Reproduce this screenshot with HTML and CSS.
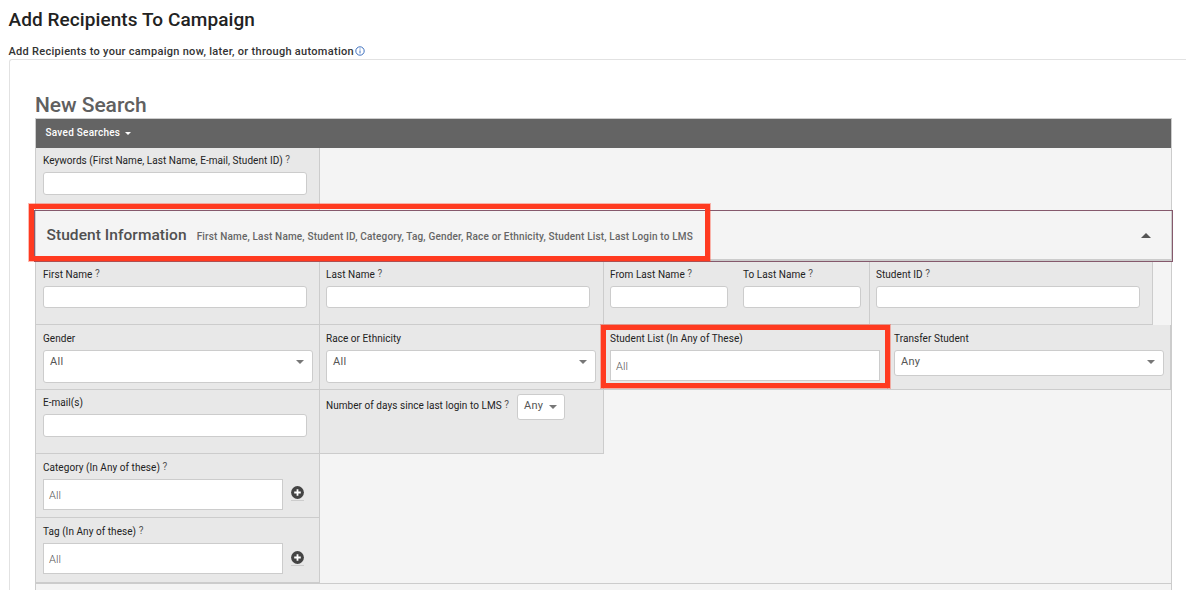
FILE: index.html
```html
<!DOCTYPE html>
<html lang="en">
<head>
    <meta charset="UTF-8">
    <meta name="viewport" content="width=device-width, initial-scale=1.0">
    <title>Add Recipients To Campaign</title>
    <link rel="stylesheet" href="styles.css">
</head>
<body>
    <h1>Add Recipients To Campaign</h1>
    <div class="subtitle">
        <span>Add Recipients to your campaign now, later, or through automation</span>
        <svg class="info" viewBox="0 0 10 10"><circle cx="5" cy="5" r="4.2"/><path d="M5 4.4v3M5 2.5v1"/></svg>
    </div>

    <div class="panel">
        <h2>New Search</h2>
        <div class="search">
            <div class="toolbar">Saved Searches <i class="caret"></i></div>

            <div class="row keywords">
                <div class="cell">
                    <label>Keywords (First Name, Last Name, E-mail, Student ID) <sup>?</sup></label>
                    <input type="text">
                </div>
            </div>

            <div class="section-head">
                <h3>Student Information</h3>
                <span class="summary">First Name, Last Name, Student ID, Category, Tag, Gender, Race or Ethnicity, Student List, Last Login to LMS</span>
                <i class="caret up"></i>
                <div class="highlight highlight-head"></div>
            </div>

            <div class="row">
                <div class="cell">
                    <label>First Name <sup>?</sup></label>
                    <input type="text">
                </div>
                <div class="cell">
                    <label>Last Name <sup>?</sup></label>
                    <input type="text">
                </div>
                <div class="cell range">
                    <div>
                        <label>From Last Name <sup>?</sup></label>
                        <input type="text">
                    </div>
                    <div>
                        <label>To Last Name <sup>?</sup></label>
                        <input type="text">
                    </div>
                </div>
                <div class="cell last">
                    <label>Student ID <sup>?</sup></label>
                    <input type="text">
                </div>
            </div>

            <div class="row tall">
                <div class="cell">
                    <label>Gender</label>
                    <div class="select big">All <i class="caret"></i></div>
                </div>
                <div class="cell">
                    <label>Race or Ethnicity</label>
                    <div class="select big">All <i class="caret"></i></div>
                </div>
                <div class="cell">
                    <label>Student List (In Any of These)</label>
                    <div class="multi wide">All</div>
                    <div class="highlight highlight-list"></div>
                </div>
                <div class="cell last">
                    <label>Transfer Student</label>
                    <div class="select">Any <i class="caret"></i></div>
                </div>
            </div>

            <div class="row">
                <div class="cell email">
                    <label>E-mail(s)</label>
                    <input type="text">
                </div>
                <div class="cell login">
                    <label>Number of days since last login to LMS <sup>?</sup></label>
                    <div class="select small">Any <i class="caret"></i></div>
                </div>
            </div>

            <div class="row">
                <div class="cell">
                    <label>Category (In Any of these) <sup>?</sup></label>
                    <div class="picker">
                        <div class="multi">All</div>
                        <a class="add"><svg viewBox="0 0 13 13"><circle cx="6.5" cy="6.5" r="6.4"/><path d="M6.5 3.2v6.6M3.2 6.5h6.6"/></svg></a>
                    </div>
                </div>
            </div>

            <div class="row tall">
                <div class="cell">
                    <label>Tag (In Any of these) <sup>?</sup></label>
                    <div class="picker tag">
                        <div class="multi">All</div>
                        <a class="add"><svg viewBox="0 0 13 13"><circle cx="6.5" cy="6.5" r="6.4"/><path d="M6.5 3.2v6.6M3.2 6.5h6.6"/></svg></a>
                    </div>
                </div>
            </div>

            <div class="next-section"></div>
        </div>
    </div>
</body>
</html>
```

FILE: styles.css
```css
* {
    margin: 0;
    padding: 0;
    box-sizing: border-box;
}

body {
    height: 590px;
    overflow: hidden;
    padding-left: 9px;
    background: #fff;
    color: #222;
    font-family: Roboto, "Liberation Sans", sans-serif;
    font-size: 10px;
}

h1 {
    height: 43px;
    margin-left: -0.5px;
    padding-top: 7px;
    font-size: 19px;
    font-weight: 500;
    line-height: 25px;
    letter-spacing: 0.08px;
}

.subtitle {
    display: flex;
    align-items: center;
    height: 16px;
    margin-left: -0.5px;
    color: #333;
    font-size: 11px;
    font-weight: 500;
    letter-spacing: 0.29px;
}

.subtitle span {
    line-height: 16px;
    padding-top: 1px;
}

.info {
    width: 10px;
    height: 10px;
    margin-left: 1px;
    fill: none;
    stroke: #2a62b8;
    stroke-width: 0.9;
}

.panel {
    height: 540px;
    padding: 32px 0 0 25px;
    border-top: 1px solid #e2e2e2;
    border-left: 1px solid #e2e2e2;
    border-top-left-radius: 3px;
}

h2 {
    height: 26px;
    color: #606060;
    font-size: 21px;
    font-weight: 500;
    line-height: 26px;
    letter-spacing: -0.05px;
}

.search {
    width: 1137px;
    height: 500px;
    border: 1px solid #ccc;
    background: #f4f4f4;
}

.toolbar {
    display: flex;
    align-items: center;
    height: 29px;
    padding: 0 0 2px 9.5px;
    background: #646464;
    color: #fff;
    font-weight: 500;
    letter-spacing: 0.25px;
}

.caret {
    width: 0;
    height: 0;
    border: 4px solid transparent;
    border-top-color: #777;
    border-bottom: 0;
}

.toolbar .caret {
    margin: 2px 0 0 5px;
    border-width: 3px;
    border-top-color: #fff;
    border-bottom: 0;
}

.row {
    display: flex;
    height: 64px;
}

.tall {
    height: 65px;
}

.keywords {
    height: 62px;
}

.cell {
    position: relative;
    width: 284px;
    padding: 7px 0 0 6px;
    border-right: 1px solid #ccc;
    border-bottom: 1px solid #ccc;
    background: #e8e8e8;
}

.cell:first-child {
    padding-left: 7px;
}

.keywords .cell {
    height: 64px;
    padding-top: 6px;
}

.cell.last {
    width: 283px;
}

.cell label {
    display: block;
    height: 18px;
    line-height: 14px;
    letter-spacing: 0.05px;
    white-space: nowrap;
}

sup {
    position: relative;
    top: -1px;
    color: #555;
    font-size: 10px;
    line-height: 0;
    vertical-align: baseline;
}

input {
    display: block;
    width: 264px;
    height: 22px;
    border: 1px solid #ccc;
    border-radius: 3px;
    background: #fff;
}

.keywords input,
.email input {
    height: 23px;
}

.cell.email {
    padding-top: 6px;
}

.range {
    display: flex;
    gap: 15px;
    width: 266px;
}

.range input {
    width: 118px;
}

.section-head {
    position: relative;
    z-index: 1;
    display: flex;
    height: 52px;
    margin: 0 -2px -1px;
    padding: 0 21px 0 11.5px;
    border: 1px solid #85596c;
    background: #f4f4f4;
    box-shadow: inset 0 -2px #ccc, inset -1px 0 #ccc, inset 1px 0 #ccc;
}

h3 {
    color: #505050;
    font-size: 15.5px;
    font-weight: 500;
    line-height: 48px;
    letter-spacing: 0.06px;
}

.summary {
    flex: 1;
    margin-left: 10px;
    color: #666;
    font-weight: 500;
    line-height: 51px;
    letter-spacing: 0.17px;
}

.caret.up {
    margin-top: 22px;
    border: 5px solid transparent;
    border-top: 0;
    border-bottom-color: #555;
}

.highlight {
    position: absolute;
    border: 5px solid #ff3a20;
    outline: 1px solid rgba(255, 58, 32, 0.35);
}

.highlight-head {
    top: -7px;
    left: -6px;
    width: 681px;
    height: 57px;
}

.highlight-list {
    top: 0;
    left: -3px;
    width: 289px;
    height: 63px;
    z-index: 1;
}

.select {
    display: flex;
    justify-content: space-between;
    width: 270px;
    height: 26px;
    padding: 0 8px 0 6px;
    border: 1px solid #ccc;
    border-radius: 3px;
    background: #fff;
    color: #555;
    font-size: 11px;
    line-height: 22px;
    letter-spacing: 0.3px;
}

.select .caret {
    margin-top: 9px;
}

.select.big {
    height: 33px;
}

.multi {
    width: 240px;
    height: 31px;
    padding-left: 5px;
    border: 1px solid #ccc;
    background: #fff;
    color: #555;
    font-size: 11px;
    font-weight: 300;
    line-height: 31px;
    letter-spacing: 0.1px;
}

.multi.wide {
    width: 270px;
}

.login {
    display: flex;
    padding-top: 4px;
}

.login label {
    line-height: 24px;
}

.select.small {
    width: 48px;
    margin-left: 8px;
    padding-right: 7px;
}

.select.small .caret {
    margin-top: 10px;
}

.picker {
    display: flex;
}

.add {
    width: 13px;
    height: 15px;
    margin: 7px 0 0 8px;
    border-bottom: 1px solid #ccc;
}

.tag .add {
    margin-top: 8px;
}

.add svg {
    display: block;
    width: 13px;
    height: 13px;
    fill: #444;
}

.add path {
    stroke: #fff;
    stroke-width: 1.8;
}

.next-section {
    height: 20px;
    border-top: 1px solid #ccc;
}
```
